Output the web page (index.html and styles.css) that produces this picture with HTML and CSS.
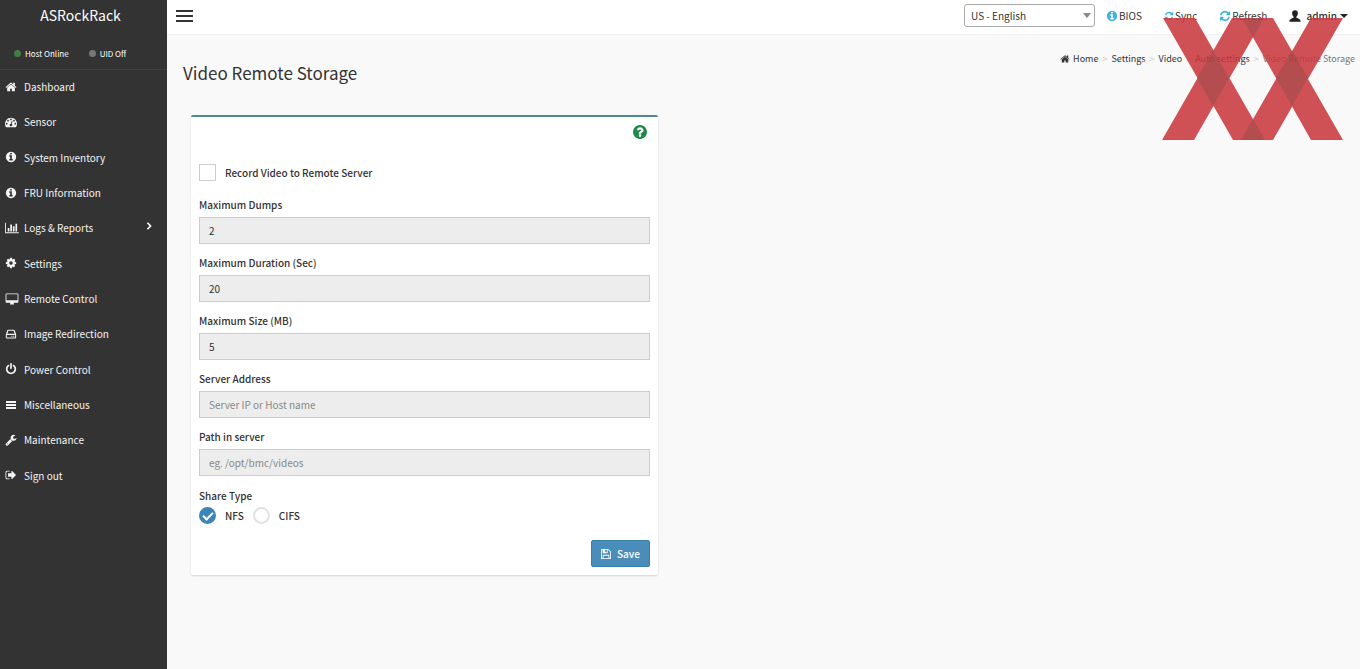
FILE: index.html
```
<!DOCTYPE html>
<html lang="en">
<head>
    <meta charset="UTF-8">
    <meta name="viewport" content="width=device-width, initial-scale=1.0">
    <title>Video Remote Storage</title>
    <link rel="stylesheet" href="styles.css">
</head>
<body>
    <!-- shared icon shapes -->
    <svg class="sprite" aria-hidden="true">
        <symbol id="home" viewBox="0 0 1792 1792"><path d="M1472 992v480q0 26-19 45t-45 19h-384v-384h-256v384h-384q-26 0-45-19t-19-45v-480q0-1 .5-3t.5-3l575-474 575 474q1 2 1 6zm223-69l-62 74q-8 9-21 11h-3q-13 0-21-7l-692-577-692 577q-12 8-24 7-13-2-21-11l-62-74q-8-10-7-23.500t11-21.500l719-599q32-26 76-26t76 26l244 204v-195q0-14 9-23t23-9h192q14 0 23 9t9 23v408l219 182q10 8 11 21.500t-7 23.500z"/></symbol>
        <symbol id="info" viewBox="0 0 1792 1792"><path d="M1152 1376v-160q0-14-9-23t-23-9h-96v-512q0-14-9-23t-23-9h-320q-14 0-23 9t-9 23v160q0 14 9 23t23 9h96v320h-96q-14 0-23 9t-9 23v160q0 14 9 23t23 9h448q14 0 23-9t9-23zm-128-896v-160q0-14-9-23t-23-9h-192q-14 0-23 9t-9 23v160q0 14 9 23t23 9h192q14 0 23-9t9-23zm640 416q0 209-103 385.500t-279.500 279.500-385.500 103-385.500-103-279.500-279.500-103-385.500 103-385.500 279.500-279.500 385.500-103 385.500 103 279.500 279.500 103 385.500z"/></symbol>
        <symbol id="refresh" viewBox="0 0 1792 1792"><path d="M1639 1056q0 5-1 7-64 268-268 434.500t-478 166.500q-146 0-282.500-55t-243.500-157l-129 129q-19 19-45 19t-45-19-19-45v-448q0-26 19-45t45-19h448q26 0 45 19t19 45-19 45l-137 137q71 66 161 102t187 36q134 0 250-65t186-179q11-17 53-117 8-23 30-23h192q13 0 22.500 9.500t9.500 22.500zm25-800v448q0 26-19 45t-45 19h-448q-26 0-45-19t-19-45 19-45l138-138q-148-137-349-137-134 0-250 65t-186 179q-11 17-53 117-8 23-30 23h-199q-13 0-22.500-9.500t-9.500-22.500v-7q65-268 270-434.500t480-166.500q146 0 284 55.500t245 156.500l130-129q19-19 45-19t45 19 19 45z"/></symbol>
    </svg>

    <div class="app">
        <aside class="sidebar">
            <a class="brand" href="#">ASRockRack</a>
            <div class="status">
                <span><i class="dot online"></i>Host Online</span>
                <span><i class="dot"></i>UID Off</span>
            </div>
            <nav class="menu">
                <a href="#"><svg class="icon"><use href="#home"/></svg>Dashboard</a>
                <a href="#"><svg class="icon" viewBox="0 0 1792 1792"><path fill-rule="evenodd" d="M1792 1152q0 261-141 483-19 29-54 29h-1402q-35 0-54-29-141-221-141-483 0-182 71-348t191-286 286-191 348-71 348 71 286 191 191 286 71 348zM384 1152a128 128 0 1 0-256 0 128 128 0 1 0 256 0zM576 704a128 128 0 1 0-256 0 128 128 0 1 0 256 0zM1024 512a128 128 0 1 0-256 0 128 128 0 1 0 256 0zM1472 704a128 128 0 1 0-256 0 128 128 0 1 0 256 0zM1664 1152a128 128 0 1 0-256 0 128 128 0 1 0 256 0zM1004 1185l101-382q6-26-7.500-48.500t-38.500-29.500-48 6.500-30 39.500l-101 382q-60 5-107 43.500t-63 98.500q-20 77 20 146t117 89 146-20 89-117q16-60-6-117t-72-91z"/></svg>Sensor</a>
                <a href="#"><svg class="icon"><use href="#info"/></svg>System Inventory</a>
                <a href="#"><svg class="icon"><use href="#info"/></svg>FRU Information</a>
                <a href="#"><svg class="icon wide" viewBox="0 0 2048 1792"><path d="M640 896v512h-256v-512h256zm384-512v1024h-256v-1024h256zm1024 1152v128h-2048v-1536h128v1408h1920zm-640-896v768h-256v-768h256zm384-384v1152h-256v-1152h256z"/></svg>Logs &amp; Reports
                    <svg class="chevron" viewBox="0 0 6 10"><path d="M1 1l4 4-4 4"/></svg></a>
                <a href="#"><svg class="icon" viewBox="0 0 1792 1792"><path d="M1152 896q0-106-75-181t-181-75-181 75-75 181 75 181 181 75 181-75 75-181zm512-109v222q0 12-8 23t-20 13l-185 28q-19 54-39 91 35 50 107 138 10 12 10 25t-9 23q-27 37-99 108t-94 71q-12 0-26-9l-138-108q-44 23-91 38-16 136-29 186-7 28-36 28h-222q-14 0-24.500-8.500t-11.500-21.500l-28-184q-49-16-90-37l-141 107q-10 9-25 9-14 0-25-11-126-114-165-168-7-10-7-23 0-12 8-23 15-21 51-66.500t54-70.500q-27-50-41-99l-183-27q-13-2-21-12.500t-8-23.500v-222q0-12 8-23t19-13l186-28q14-46 39-92-40-57-107-138-10-12-10-24 0-10 9-23 26-36 98.500-107.500t94.500-71.500q13 0 26 10l138 107q44-23 91-38 16-136 29-186 7-28 36-28h222q14 0 24.500 8.500t11.500 21.500l28 184q49 16 90 37l142-107q9-9 24-9 13 0 25 10 129 119 165 170 7 8 7 22 0 12-8 23-15 21-51 66.500t-54 70.500q26 50 41 98l183 28q13 2 21 12.500t8 23.500z"/></svg>Settings</a>
                <a href="#"><svg class="icon wide" viewBox="-64 -64 1920 1792"><path d="M1728 992v-832q0-13-9.500-22.500t-22.500-9.500h-1600q-13 0-22.500 9.500t-9.500 22.500v832q0 13 9.500 22.500t22.500 9.500h1600q13 0 22.500-9.500t9.500-22.500zm128-832v1088q0 66-47 113t-113 47h-544q0 37 16 77.500t32 71 16 43.500q0 26-19 45t-45 19h-512q-26 0-45-19t-19-45q0-14 16-44t32-70 16-78h-544q-66 0-113-47t-47-113v-1088q0-66 47-113t113-47h1600q66 0 113 47t47 113z"/></svg>Remote Control</a>
                <a href="#"><svg class="icon" viewBox="0 0 14 14"><path fill-rule="evenodd" d="M4 2h6q1.200 0 1.600 1.100L13 7.500V11q0 1.200-1.200 1.200H2.200Q1 12.200 1 11V7.500l1.400-4.400Q2.800 2 4 2zM3.900 3.200 2.800 6.800h8.400l-1.200-3.600zM2.200 8.200v2.800h9.600V8.200zM7.300 9h1.300v1.300H7.300zM9.600 9h1.300v1.300H9.600z"/></svg>Image Redirection</a>
                <a href="#"><svg class="icon" viewBox="0 0 1792 1792"><path d="M1664 896q0 156-61 298t-164 245-245 164-298 61-298-61-245-164-164-245-61-298q0-182 80.500-343t226.500-270q43-32 95.500-25t83.500 50q32 42 24.500 94.500t-49.500 84.500q-98 74-151.500 181t-53.500 228q0 104 40.500 198.500t109.500 163.500 163.500 109.500 198.500 40.500 198.500-40.500 163.500-109.500 109.500-163.500 40.500-198.500q0-121-53.500-228t-151.500-181q-42-32-49.500-84.500t24.500-94.500q31-43 84-50t95 25q146 109 226.500 270t80.500 343zm-640-768v640q0 52-38 90t-90 38-90-38-38-90v-640q0-52 38-90t90-38 90 38 38 90z"/></svg>Power Control</a>
                <a href="#"><svg class="icon" viewBox="0 0 12 12"><path d="M1 2h10v2H1zM1 5h10v2H1zM1 8h10v2H1z"/></svg>Miscellaneous</a>
                <a href="#"><svg class="icon" viewBox="0 0 1792 1792"><path d="M448 1472q0-26-19-45t-45-19-45 19-19 45 19 45 45 19 45-19 19-45zm644-420l-682 682q-37 37-90 37-52 0-91-37l-106-108q-38-36-38-90 0-53 38-91l681-681q39 98 114.500 173.500t173.500 114.500zm634-435q0 39-23 106-47 134-164.500 217.500t-258.500 83.500q-185 0-316.500-131.500t-131.500-316.500 131.500-316.500 316.500-131.500q58 0 121.500 16.500t107.500 46.500q16 11 16 28t-16 28l-293 169v224l193 107q5-3 79-48.500t135.500-81 70.500-35.500q15 0 23.500 10t8.500 25z"/></svg>Maintenance</a>
                <a href="#"><svg class="icon" viewBox="0 0 1792 1792"><path d="M704 1440q0 4 1 20t.5 26.500-3 23.500-10 19.500-20.500 6.500h-320q-119 0-203.500-84.500t-84.500-203.500v-704q0-119 84.500-203.500t203.500-84.500h320q13 0 22.500 9.500t9.500 22.500q0 4 1 20t.5 26.500-3 23.500-10 19.500-20.500 6.500h-320q-66 0-113 47t-47 113v704q0 66 47 113t113 47h312l11.500 1 11.500 3 8 5.500 7 9 2 13.500zm928-544q0 26-19 45l-544 544q-19 19-45 19t-45-19-19-45v-288h-448q-26 0-45-19t-19-45v-384q0-26 19-45t45-19h448v-288q0-26 19-45t45-19 45 19l544 544q19 19 19 45z"/></svg>Sign out</a>
            </nav>
        </aside>

        <div class="main">
            <header class="topbar">
                <button class="toggle" type="button" aria-label="Toggle navigation"><i></i><i></i><i></i></button>
                <div class="tools">
                    <div class="language">
                        <select aria-label="Language">
                            <option>US - English</option>
                        </select>
                    </div>
                    <a class="tool" href="#"><svg class="icon"><use href="#info"/></svg>BIOS</a>
                    <a class="tool" href="#"><svg class="icon small"><use href="#refresh"/></svg>Sync</a>
                    <a class="tool" href="#"><svg class="icon"><use href="#refresh"/></svg>Refresh</a>
                    <a class="tool user" href="#"><svg class="icon" viewBox="0 0 12 12"><path d="M6 .3c1.900 0 2.900 1.300 2.900 3 0 1.600-.7 2.700-1.500 3.500v1c1.500.6 4.300 1.200 4.300 3.900H.3c0-2.700 2.800-3.300 4.300-3.900v-1C3.800 6 3.100 4.900 3.100 3.300c0-1.700 1-3 2.900-3z"/></svg>admin<i class="caret"></i></a>
                </div>
            </header>

            <main class="content">
                <div class="page-head">
                    <h1>Video Remote Storage</h1>
                    <ol class="breadcrumb">
                        <li><a href="#"><svg class="icon"><use href="#home"/></svg>Home</a></li>
                        <li><a href="#">Settings</a></li>
                        <li><a href="#">Video</a></li>
                        <li><a href="#">Auto settings</a></li>
                        <li class="active">Video Remote Storage</li>
                    </ol>
                </div>

                <div class="column">
                    <form class="box">
                        <a class="help" href="#" aria-label="Help"><svg viewBox="128 128 1536 1536"><path d="M1024 1376v-192q0-14-9-23t-23-9h-192q-14 0-23 9t-9 23v192q0 14 9 23t23 9h192q14 0 23-9t9-23zm256-672q0-88-55.500-163t-138.500-116-170-41q-243 0-371 213-15 24 8 42l132 100q7 6 19 6 16 0 25-12 53-68 86-92 34-24 86-24 48 0 85.500 26t37.500 59q0 38-20 61t-68 45q-63 28-115.500 86.500t-52.500 125.500v36q0 14 9 23t23 9h192q14 0 23-9t9-23q0-19 21.500-49.500t54.500-49.500q32-18 49-28.500t46-35 44.500-48 28-60.500 12.500-81zm384 192q0 209-103 385.500t-279.500 279.500-385.500 103-385.500-103-279.500-279.500-103-385.500 103-385.500 279.500-279.500 385.500-103 385.500 103 279.500 279.500 103 385.500z"/></svg></a>

                        <label class="check record"><input type="checkbox">Record Video to Remote Server</label>

                        <div class="field">
                            <label for="dumps">Maximum Dumps</label>
                            <input type="text" id="dumps" value="2" disabled>
                        </div>
                        <div class="field">
                            <label for="duration">Maximum Duration (Sec)</label>
                            <input type="text" id="duration" value="20" disabled>
                        </div>
                        <div class="field">
                            <label for="size">Maximum Size (MB)</label>
                            <input type="text" id="size" value="5" disabled>
                        </div>
                        <div class="field">
                            <label for="address">Server Address</label>
                            <input type="text" id="address" placeholder="Server IP or Host name" disabled>
                        </div>
                        <div class="field">
                            <label for="path">Path in server</label>
                            <input type="text" id="path" placeholder="eg. /opt/bmc/videos" disabled>
                        </div>

                        <fieldset class="share">
                            <legend>Share Type</legend>
                            <div class="radios">
                                <label class="check"><input type="radio" name="share" checked>NFS</label>
                                <label class="check"><input type="radio" name="share">CIFS</label>
                            </div>
                        </fieldset>

                        <button class="save" type="submit"><svg class="icon" viewBox="128 128 1536 1536"><path d="M512 1536h768v-384h-768v384zm896 0h128v-896q0-14-10-38.500t-20-34.500l-281-281q-10-10-34-20t-39-10v416q0 40-28 68t-68 28h-576q-40 0-68-28t-28-68v-416h-128v1280h128v-416q0-40 28-68t68-28h832q40 0 68 28t28 68v416zm-384-928v-320q0-13-9.500-22.500t-22.500-9.500h-192q-13 0-22.500 9.500t-9.500 22.500v320q0 13 9.500 22.500t22.500 9.500h192q13 0 22.500-9.500t9.500-22.500zm640 32v928q0 40-28 68t-68 28h-1344q-40 0-68-28t-28-68v-1344q0-40 28-68t68-28h928q40 0 88 20t76 48l280 280q28 28 48 76t20 88z"/></svg>Save</button>
                    </form>
                </div>
            </main>
        </div>
    </div>

    <!-- crossed bands over the top right corner -->
    <svg class="watermark" viewBox="0 0 182 122" aria-hidden="true">
        <path class="band" d="M1 0h32l70 122H71zM70 0h32L32 122H0zM80 0h31l70 122h-32zM149 0h32l-70 122H79z"/>
        <path class="overlap" d="M51 32l16 28-16 28-16-28zM130 32l16 28-16 28-16-28zM80 0h22L91 20zM79 122h24l-12-21z"/>
    </svg>
</body>
</html>
```
FILE: styles.css
```
* {
    box-sizing: border-box;
}
body {
    margin: 0;
    font-family: "Source Sans Pro", "Noto Sans CJK SC", sans-serif;
    font-size: 10px;
    line-height: 17px;
    color: #333;
    background: #f9f9f9;
}
a {
    color: inherit;
    text-decoration: none;
}
input, select, button {
    font: inherit;
    color: inherit;
}
.sprite {
    display: none;
}
.icon {
    width: 12px;
    height: 12px;
    flex: none;
    fill: currentColor;
}
.app {
    display: flex;
    min-height: 100vh;
}

/* sidebar */
.sidebar {
    width: 167px;
    flex: none;
    background: #333;
    color: #f4f4f4;
}
.brand {
    display: block;
    height: 36px;
    padding-right: 6px;
    line-height: 31px;
    font-size: 14px;
    text-align: center;
    color: #fff;
}
.status {
    display: flex;
    gap: 20px;
    height: 34px;
    padding: 9px 14px 7px;
    border-bottom: 1px solid #404040;
    font-size: 8px;
    color: #fff;
}
.status span {
    display: flex;
    align-items: center;
    gap: 4px;
}
.dot {
    width: 7px;
    height: 7px;
    border-radius: 50%;
    background: #777;
}
.dot.online {
    background: #3f7f45;
}
.menu {
    display: grid;
    grid-auto-rows: 1fr;
    height: 424px;
}
.menu a {
    display: flex;
    align-items: center;
    padding: 0 0 2px 5px;
}
.menu .icon {
    margin-right: 7px;
}
.menu .icon.wide {
    width: 14px;
    margin-right: 5px;
}
.chevron {
    width: 6px;
    height: 8px;
    margin: 0 15px 4px auto;
    fill: none;
    stroke: #fff;
    stroke-width: 2;
}

/* top bar */
.main {
    flex: 1;
    min-width: 0;
}
.topbar {
    display: flex;
    justify-content: space-between;
    height: 35px;
    padding: 4px 12px 0 9px;
    background: #fff;
    border-bottom: 1px solid #f0f0f0;
}
.toggle {
    display: flex;
    flex-direction: column;
    gap: 3px;
    width: 17px;
    height: 24px;
    padding: 6px 0 0;
    border: 0;
    background: none;
}
.toggle i {
    width: 17px;
    height: 2px;
    background: #333;
}
.tools {
    display: flex;
    align-items: center;
    height: 23px;
}
.language {
    position: relative;
    width: 131px;
    margin-right: 11px;
}
.language select {
    width: 100%;
    height: 23px;
    padding: 0 6px;
    appearance: none;
    border: 1px solid #aaa;
    border-radius: 3px;
    background: #fff;
}
.language::after {
    content: "";
    position: absolute;
    top: 9px;
    right: 4px;
    border: 4px solid transparent;
    border-top: 5px solid #888;
    border-bottom: 0;
    pointer-events: none;
}
.tool {
    display: flex;
    align-items: center;
    gap: 1px;
    margin-right: 22px;
}
.tool .icon {
    fill: #3fb2e3;
}
.tool .icon.small {
    width: 10px;
    height: 10px;
}
.tool.user {
    margin-right: 0;
    font-weight: 500;
}
.tool.user .icon {
    margin-right: 4px;
    fill: #222;
}
.caret {
    margin-left: 2px;
    border: 4px solid transparent;
    border-top-color: #222;
    border-bottom: 0;
}

/* page */
.content {
    padding: 0 18px 0 16px;
}
.page-head {
    display: flex;
    justify-content: space-between;
    margin-right: -13px;
}
h1 {
    margin: 25px 0 29px;
    font-size: 17px;
    line-height: 26px;
    font-weight: 400;
}
.breadcrumb {
    display: flex;
    margin: 15px 0 0;
    padding: 0;
    list-style: none;
    font-size: 9px;
}
.breadcrumb a {
    display: inline-flex;
    align-items: center;
    gap: 3px;
}
.breadcrumb .icon {
    width: 10px;
    height: 10px;
}
.breadcrumb li + li::before {
    content: ">";
    padding: 0 4px;
    color: #ccc;
}
.breadcrumb .active {
    color: #777;
}
.column {
    width: 41.6667%;
    padding: 0 8px;
}
.box {
    display: flex;
    flex-direction: column;
    padding: 8px;
    border-top: 2px solid #4a8a9c;
    border-radius: 2px;
    background: #fff;
    box-shadow: 0 1px 2px rgba(0, 0, 0, 0.15);
}
.help {
    align-self: flex-end;
    width: 14px;
    height: 14px;
    margin: 0 3px 25px 0;
}
.help svg {
    display: block;
    fill: #1f8a4c;
}
.check {
    display: flex;
    align-items: center;
    gap: 9px;
    font-weight: 500;
}
.check.record {
    margin-bottom: 5px;
}
.check input {
    appearance: none;
    width: 17px;
    height: 17px;
    margin: 0;
    border: 1px solid #ccc;
    background: #fff;
}
.field {
    margin-top: 10px;
}
.field label, .share legend {
    display: block;
    padding: 0;
    font-weight: 500;
}
.field input {
    display: block;
    width: 100%;
    height: 27px;
    margin-top: 4px;
    padding: 0 9px;
    border: 1px solid #ccc;
    border-radius: 0;
    background: #ededed;
}
.field input::placeholder {
    color: #888;
}
.share {
    margin: 11px 0 0;
    padding: 0;
    border: 0;
}
.radios {
    display: flex;
    gap: 9px;
    padding-top: 3px;
}
.radios input {
    border: 2px solid #e2e2e2;
    border-radius: 50%;
}
.radios input:checked {
    border-color: #3c85b8;
    background: #3c85b8;
    display: grid;
    place-items: center;
}
.radios input:checked::before {
    content: "";
    width: 8px;
    height: 4px;
    margin-bottom: 2px;
    border: solid #fff;
    border-width: 0 0 2px 2px;
    transform: rotate(-45deg);
}
.save {
    display: flex;
    align-items: center;
    justify-content: center;
    align-self: flex-end;
    gap: 6px;
    height: 27px;
    margin-top: 16px;
    padding: 0 9px;
    border: 1px solid #367fa9;
    border-radius: 2px;
    background: #4a8dbb;
    color: #fff;
    font-weight: 500;
}
.save .icon {
    width: 10px;
    height: 10px;
}

.watermark {
    position: absolute;
    top: 18px;
    right: 16px;
    width: 182px;
    height: 122px;
    pointer-events: none;
}
.band {
    fill: #c9353a;
    fill-opacity: 0.86;
}
.overlap {
    fill: #804848;
    fill-opacity: 0.35;
}
```
